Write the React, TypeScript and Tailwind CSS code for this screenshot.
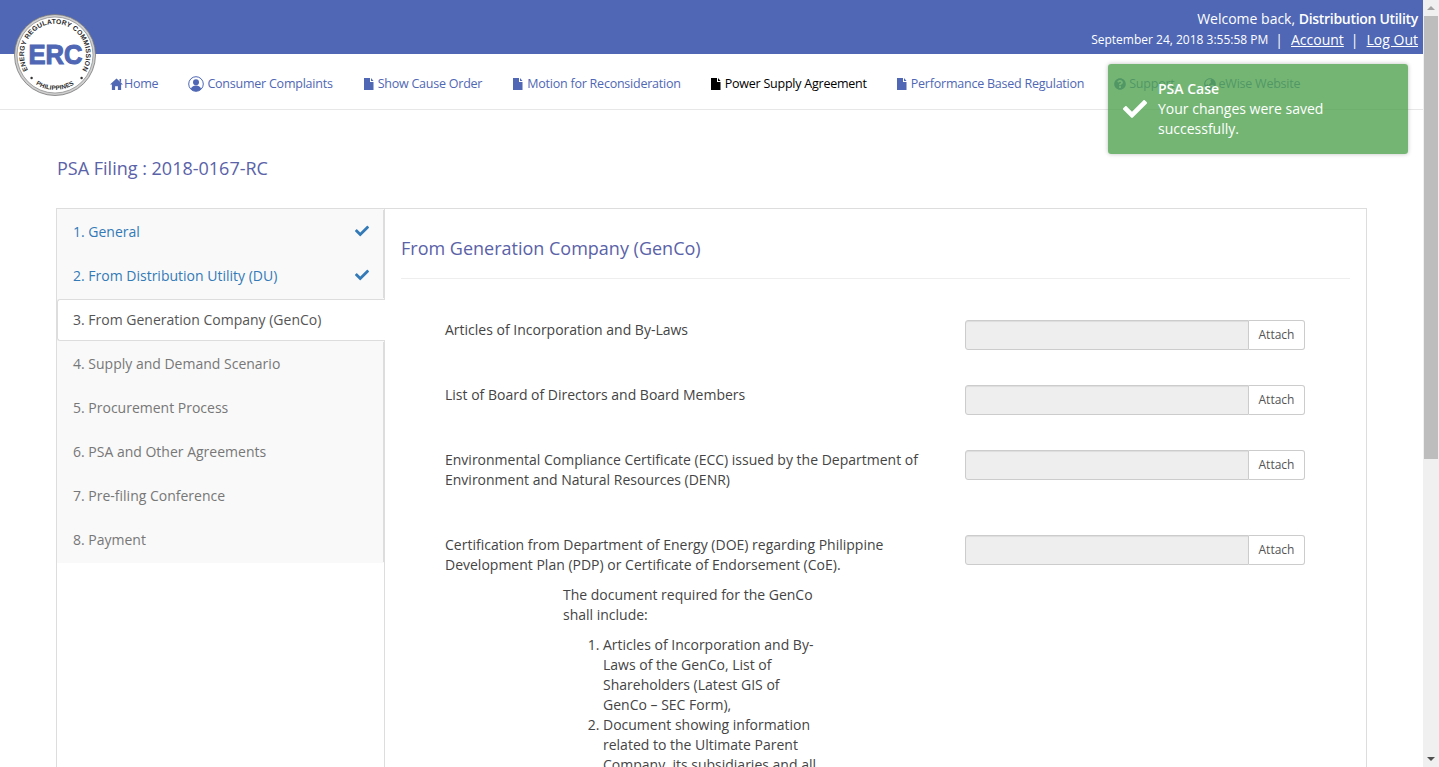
import { FaCheck, FaQuestionCircle, FaGlobeAsia } from "react-icons/fa";

const sideItems = [
  { label: "1. General", done: true },
  { label: "2. From Distribution Utility (DU)", done: true },
  { label: "3. From Generation Company (GenCo)", active: true },
  { label: "4. Supply and Demand Scenario" },
  { label: "5. Procurement Process" },
  { label: "6. PSA and Other Agreements" },
  { label: "7. Pre-filing Conference" },
  { label: "8. Payment" },
];

function Logo() {
  return (
    <svg viewBox="0 0 82 82" className="absolute left-[14px] top-[14px] h-[82px] w-[82px]">
      <defs>
        <path id="topArc" d="M 14 56 A 31 31 0 1 1 68 56" />
        <path id="bottomArc" d="M 11 59 A 35 35 0 0 0 71 59" />
      </defs>
      <circle cx="41" cy="41" r="40.5" fill="#cfcfcf" stroke="#777" strokeWidth="0.8" />
      <circle cx="41" cy="41" r="38" fill="#fff" stroke="#888" strokeWidth="0.7" />
      <text fontFamily="'Liberation Sans', sans-serif" fontWeight="700" fontSize="6.8" fill="#2b2b2b" letterSpacing="0.2">
        <textPath href="#topArc" startOffset="50%" textAnchor="middle">ENERGY REGULATORY COMMISSION</textPath>
      </text>
      <text fontFamily="'Liberation Sans', sans-serif" fontWeight="700" fontSize="6.3" fill="#2b2b2b" letterSpacing="0.1">
        <textPath href="#bottomArc" startOffset="50%" textAnchor="middle">PHILIPPINES</textPath>
      </text>
      <circle cx="17.6" cy="64" r="1.2" fill="#333" />
      <circle cx="67.6" cy="64" r="1.2" fill="#333" />
      <text
        x="41.5"
        y="50"
        textAnchor="middle"
        fontFamily="'Liberation Sans', sans-serif"
        fontWeight="700"
        fontSize="28"
        fill="#4f67b4"
        stroke="#4f67b4"
        strokeWidth="1.1"
        textLength="54"
        lengthAdjust="spacingAndGlyphs"
      >
        ERC
      </text>
    </svg>
  );
}

function HomeIcon() {
  return (
    <svg viewBox="0 0 14 13" className="h-[12px] w-[13px]" fill="currentColor">
      <path d="M7 .5 14 7h-2v6H8.5V9h-3v4H2V7H0z" />
      <path d="M10.3 1H12v4l-1.7-1.6z" />
    </svg>
  );
}

function FileIcon() {
  return (
    <svg viewBox="0 0 10 12" className="h-[12px] w-[10px]" fill="currentColor">
      <path d="M0 0h6v4h3.5v8H0z" />
      <path d="M7 0l2.5 3H7z" />
    </svg>
  );
}

function UserCircle() {
  return (
    <svg viewBox="0 0 16 16" className="h-[16px] w-[16px]" fill="none">
      <circle cx="8" cy="8" r="7.3" stroke="currentColor" strokeWidth="1" />
      <circle cx="8" cy="6.2" r="3" fill="currentColor" />
      <path d="M2.8 13.2c.6-2.6 2.6-3.8 5.2-3.8s4.6 1.2 5.2 3.8A7 7 0 0 1 8 15.3a7 7 0 0 1-5.2-2.1z" fill="currentColor" />
    </svg>
  );
}

function NavLink({ icon, label, className }: { icon: React.ReactNode; label: string; className: string }) {
  return (
    <a className={`flex items-center whitespace-nowrap text-[12.5px] tracking-[-0.23px] ${className}`}>
      {icon}
      <span>{label}</span>
    </a>
  );
}

function FileInput() {
  return (
    <div className="flex h-[30px] w-[340px] shrink-0">
      <div className="w-[284px] rounded-l-[3px] border border-[#ccc] bg-[#eee] shadow-[inset_0_1px_1px_rgba(0,0,0,0.075)]"></div>
      <button className="w-[56px] rounded-r-[3px] border border-l-0 border-[#ccc] bg-white text-[12px] text-[#555]">Attach</button>
    </div>
  );
}

function FileRow({ label }: { label: string }) {
  return (
    <div className="flex gap-[30px] pl-[44px]">
      <div className="w-[490px] pb-[45px] text-[#444]">{label}</div>
      <FileInput />
    </div>
  );
}

function Sidebar() {
  return (
    <ul className="w-[328px] shrink-0 self-start bg-[#f9f9f9] py-px">
      {sideItems.map((item) =>
        item.active ? (
          <li
            key={item.label}
            className="relative z-10 my-px flex h-[42px] items-center rounded-l-[3px] border-y border-l border-[#ddd] bg-white pl-[15px] text-[#555]"
          >
            {item.label}
          </li>
        ) : (
          <li
            key={item.label}
            className={`flex h-[44px] items-center justify-between border-r-2 border-[#ddd] pl-[16px] pr-[14px] ${
              item.done ? "text-[#337ab7]" : "text-[#777]"
            }`}
          >
            {item.label}
            {item.done && <FaCheck className="-mt-[2px] h-[14px] w-[14px] text-[#337ab7]" />}
          </li>
        ),
      )}
    </ul>
  );
}

export default function App() {
  return (
    <div className="flex h-screen overflow-hidden bg-white font-['Open_Sans',sans-serif] text-[14px] leading-[20px]">
      <div className="relative min-w-0 flex-1 overflow-hidden">
        {/* Top bar */}
        <header className="flex h-[54px] flex-col items-end justify-center bg-[#4f67b4] pr-[5px] pt-[4px] text-white">
          <div className="text-[14px] leading-[20px]">
            Welcome back, <b className="font-semibold tracking-[-0.3px]">Distribution Utility</b>
          </div>
          <div className="mt-px flex items-center text-[12px] leading-[20px]">
            <span>September 24, 2018 3:55:58 PM</span>
            <span className="ml-[7px] mr-[8px] text-[14px]">|</span>
            <a className="text-[14px] underline">Account</a>
            <span className="ml-[7px] mr-[8px] text-[14px]">|</span>
            <a className="text-[14px] underline">Log Out</a>
          </div>
        </header>

        {/* Nav */}
        <nav className="flex h-[56px] items-center border-b border-[#e7e7e7] pl-[110px] pt-[4px]">
          <NavLink className="mr-[30px] gap-px text-[#4f67b4]" icon={<HomeIcon />} label="Home" />
          <NavLink className="mr-[31px] gap-[3px] text-[#4f67b4]" icon={<UserCircle />} label="Consumer Complaints" />
          <NavLink className="mr-[31px] gap-[4px] text-[#4f67b4]" icon={<FileIcon />} label="Show Cause Order" />
          <NavLink className="mr-[30px] gap-[4px] text-[#4f67b4]" icon={<FileIcon />} label="Motion for Reconsideration" />
          <NavLink className="mr-[30px] gap-[4px] text-black" icon={<FileIcon />} label="Power Supply Agreement" />
          <NavLink className="mr-[30px] gap-[4px] text-[#4f67b4]" icon={<FileIcon />} label="Performance Based Regulation" />
          <NavLink className="mr-[29px] gap-[3px] text-[#4f67b4]" icon={<FaQuestionCircle className="h-[12px] w-[12px]" />} label="Support" />
          <NavLink className="gap-[3px] text-[#4f67b4]" icon={<FaGlobeAsia className="h-[12px] w-[12px]" />} label="eWise Website" />
        </nav>

        <main className="pl-[56px] pr-[56px]">
          <h1 className="ml-px mt-[45px] text-[18px] leading-[26px] text-[#5a62a8]">PSA Filing : 2018-0167-RC</h1>

          <div className="mt-[27px] flex min-h-[700px] border border-[#ddd]">
            <Sidebar />
            <section className="-ml-px min-w-0 flex-1 border-l border-[#ddd] px-[16px]">
              <h2 className="mt-[26px] border-b border-[#eee] pb-[17px] text-[18px] leading-[26px] text-[#5a62a8]">
                From Generation Company (GenCo)
              </h2>
              <div className="mt-[41px]">
                <FileRow label="Articles of Incorporation and By-Laws" />
                <FileRow label="List of Board of Directors and Board Members" />
                <FileRow label="Environmental Compliance Certificate (ECC) issued by the Department of Environment and Natural Resources (DENR)" />
                <div className="flex gap-[30px] pl-[44px]">
                  <div className="w-[490px] text-[#444]">
                    <p className="mb-[10px]">
                      Certification from Department of Energy (DOE) regarding Philippine Development Plan (PDP) or Certificate of Endorsement (CoE).
                    </p>
                    <div className="ml-[118px] w-[260px]">
                      <p className="mb-[10px]">The document required for the GenCo shall include:</p>
                      <ol className="list-decimal pl-[40px]">
                        <li>Articles of Incorporation and By-Laws of the GenCo, List of Shareholders (Latest GIS of GenCo – SEC Form),</li>
                        <li>Document showing information related to the Ultimate Parent Company, its subsidiaries and all affiliates</li>
                      </ol>
                    </div>
                  </div>
                  <FileInput />
                </div>
              </div>
            </section>
          </div>
        </main>

        <Logo />

        {/* Toast */}
        <div className="absolute left-[1108px] top-[64px] flex h-[90px] w-[300px] items-center rounded-[3px] bg-[#51a351]/80 pl-[15px] text-white shadow-[0_0_4px_rgba(0,0,0,0.25)]">
          <FaCheck className="h-[24px] w-[24px] shrink-0" />
          <div className="ml-[11px] w-[200px]">
            <div className="font-semibold">PSA Case</div>
            <div>Your changes were saved successfully.</div>
          </div>
        </div>
      </div>

      {/* Page scrollbar */}
      <div className="flex w-[16px] shrink-0 flex-col bg-[#f0f0f0]">
        <div className="flex h-[16px] items-center justify-center">
          <div className="h-0 w-0 border-x-[4px] border-b-[4px] border-x-transparent border-b-[#a3a3a3]"></div>
        </div>
        <div className="mx-[1px] h-[443px] bg-[#bdbdbd]"></div>
        <div className="flex-1"></div>
        <div className="flex h-[16px] items-center justify-center">
          <div className="h-0 w-0 border-x-[4px] border-t-[4px] border-x-transparent border-t-[#505050]"></div>
        </div>
      </div>
    </div>
  );
}
